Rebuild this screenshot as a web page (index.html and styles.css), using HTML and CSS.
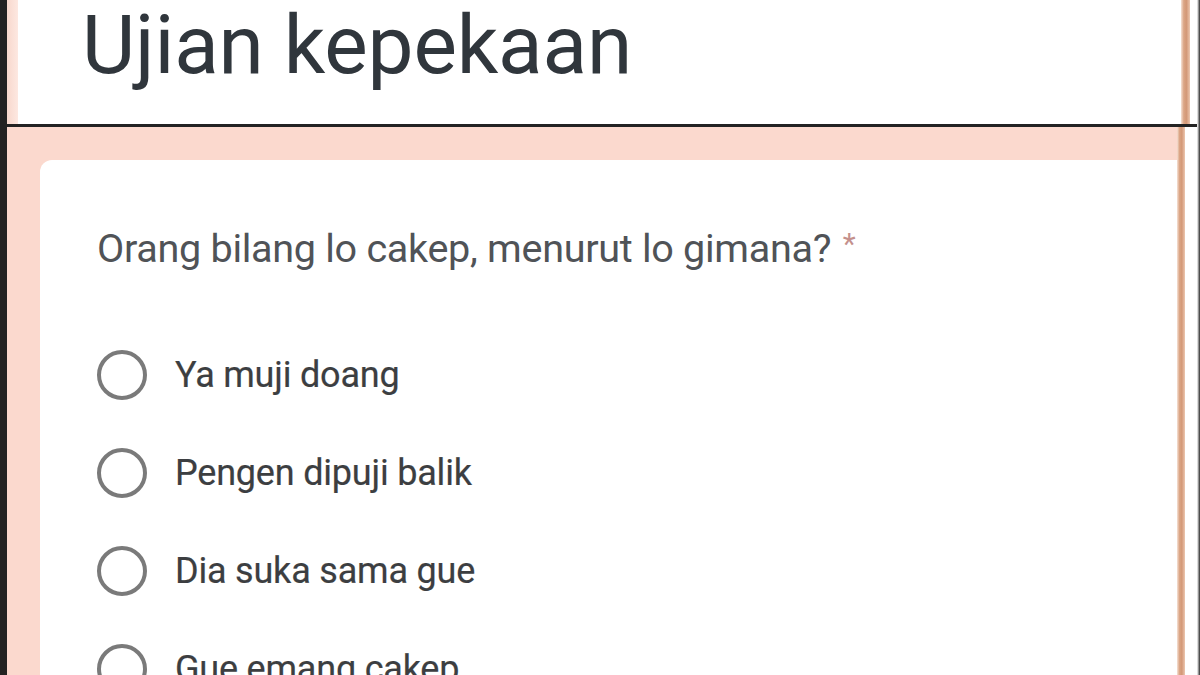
FILE: index.html
```html
<!DOCTYPE html>
<html>
<head>
<meta charset="utf-8">
<link rel="stylesheet" href="styles.css">
</head>
<body>
<div class="screen">
  <div class="edge-left"></div>
  <div class="middle">
    <div class="header">
      <div class="header-strip"></div>
      <div class="header-main"><h1 class="title">Ujian kepekaan</h1></div>
      <div class="tan-line"></div>
      <div class="gap-white"></div>
    </div>
    <div class="rule"></div>
    <div class="body-row">
      <div class="pink-area">
        <div class="card">
          <div class="question">Orang bilang lo cakep, menurut lo gimana? <span class="req">*</span></div>
          <div class="options">
            <div class="option"><span class="radio"></span><span class="label">Ya muji doang</span></div>
            <div class="option"><span class="radio"></span><span class="label">Pengen dipuji balik</span></div>
            <div class="option"><span class="radio"></span><span class="label">Dia suka sama gue</span></div>
            <div class="option"><span class="radio"></span><span class="label">Gue emang cakep</span></div>
          </div>
        </div>
      </div>
      <div class="tan-line tan-line-body"></div>
      <div class="gap-white gap-white-body"></div>
    </div>
  </div>
  <div class="edge-right"></div>
</div>
</body>
</html>
```

FILE: styles.css
```css
html, body {
  margin: 0;
  padding: 0;
  width: 1200px;
  height: 675px;
  overflow: hidden;
  background: #fff;
  font-family: Roboto, "Liberation Sans", Arial, sans-serif;
}

.screen {
  display: grid;
  grid-template-columns: 7px 1fr 3px;
  height: 675px;
}

.edge-left {
  background: #232323;
}

.edge-right {
  background: linear-gradient(to right, #ffffff 0, #2a2a2a 100%);
}

.middle {
  display: flex;
  flex-direction: column;
  min-width: 0;
}

.header {
  display: flex;
  height: 124px;
  flex: none;
}

.header-strip {
  width: 11px;
  background: linear-gradient(to right, #f8d8cd, #fde8e1);
}

.header-main {
  flex: 1;
  background: #fff;
}

.title {
  margin: 0;
  padding: 0 0 0 64px;
  font-family: Roboto, "Liberation Sans", Arial, sans-serif;
  font-weight: 400;
  font-size: 82px;
  line-height: 90px;
  color: #30363c;
  letter-spacing: -0.2px;
}

.tan-line {
  width: 9px;
  background: linear-gradient(to right, #f6e2d6 0%, #dba686 30%, #d39877 60%, #ecc7b0 100%);
}

.gap-white {
  width: 7px;
  background: #fff;
}

.rule {
  height: 3px;
  background: #232323;
  flex: none;
}

.body-row {
  display: flex;
  flex: 1;
  min-height: 0;
}

.pink-area {
  flex: 1;
  background: #fbd9ce;
  padding: 33px 0 0 33px;
  display: flex;
}

.card {
  flex: 1;
  background: #fff;
  border-top-left-radius: 12px;
  padding: 65px 0 0 57px;
}

.tan-line-body {
  width: 8px;
}

.gap-white-body {
  width: 12px;
}

.question {
  font-size: 39.6px;
  line-height: 48px;
  color: #505357;
  letter-spacing: -0.3px;
}

.req {
  color: #c4908c;
  font-size: 30px;
  position: relative;
  top: -8px;
  margin-left: 2px;
}

.options {
  margin-top: 74px;
  display: flex;
  flex-direction: column;
  gap: 48px;
}

.option {
  display: flex;
  align-items: center;
  height: 50px;
}

.radio {
  width: 42px;
  height: 42px;
  border: 4px solid #7a7a7a;
  border-radius: 50%;
  flex: none;
}

.label {
  margin-left: 28px;
  font-size: 36px;
  color: #3c3e41;
  letter-spacing: -0.2px;
  -webkit-text-stroke: 0.2px #3c3e41;
}
```
